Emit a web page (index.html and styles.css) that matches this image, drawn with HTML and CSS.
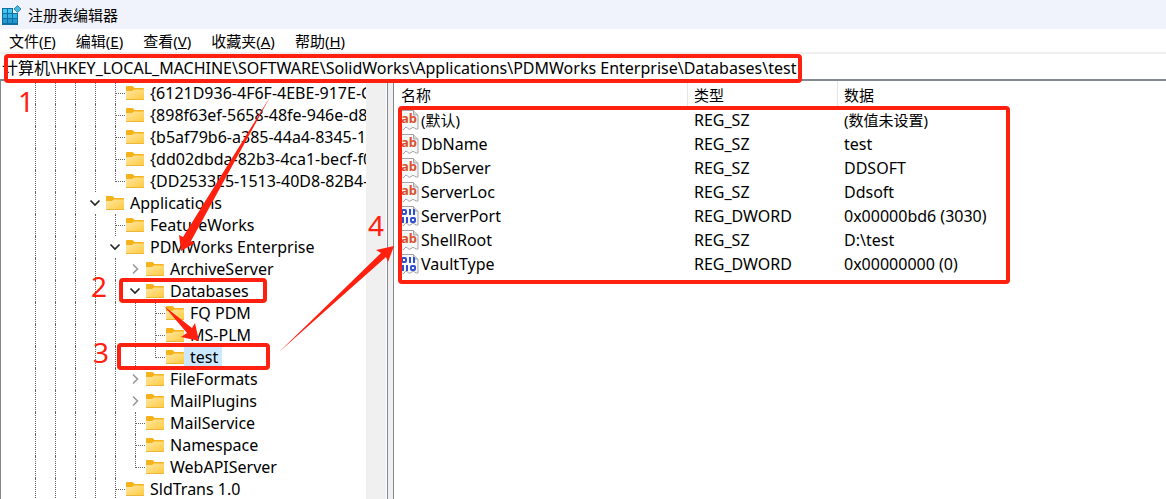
FILE: index.html
```
<!DOCTYPE html>
<html lang="zh-CN">
<head>
<meta charset="UTF-8">
<meta name="viewport" content="width=device-width, initial-scale=1.0">
<title>注册表编辑器</title>
<link rel="stylesheet" href="styles.css">
</head>

<body>

<!-- shared icons -->
<svg class="defs" aria-hidden="true">
  <defs>
    <linearGradient id="folderFill" x1="0" y1="0" x2="1" y2="1">
      <stop offset="0" stop-color="#ffe8a4"/>
      <stop offset="1" stop-color="#ffc93c"/>
    </linearGradient>
    <symbol id="folder" viewBox="0 0 18 15">
      <path d="M0 2V1q0-1 1-1h5q1 0 1.500 .7L8.500 2H17q1 0 1 1v5H0z" fill="#f5b21a"/>
      <path d="M0 5h6l2-1.500h10V14H0z" fill="url(#folderFill)"/>
      <path d="M0 13.500h18" stroke="#eeb73a"/>
    </symbol>
    <symbol id="down" viewBox="0 0 12 12">
      <path d="M1.500 3.500L6 8l4.500-4.500" fill="none" stroke="#222" stroke-width="1.600"/>
    </symbol>
    <symbol id="right" viewBox="0 0 12 12">
      <path d="M4 1.500L8.500 6 4 10.500" fill="none" stroke="#999" stroke-width="1.600"/>
    </symbol>
    <symbol id="page" viewBox="0 0 19 20">
      <path d="M1 .5h12.500l4.500 4.500V19q-2 .5-3.500-1t-3.500 .5-3.500-.5-3.500 1-2.500-1z" fill="#f7f7f7" stroke="#a5a5a5"/>
      <path d="M13.500 .5V5H18" fill="#ddd" stroke="#a5a5a5"/>
    </symbol>
    <symbol id="string" viewBox="0 0 19 20">
      <use href="#page"/>
      <text x="1" y="13" class="ab">ab</text>
    </symbol>
    <symbol id="binary" viewBox="0 0 19 20">
      <use href="#page"/>
      <g fill="none" stroke="#2f4fd0" stroke-width="2">
        <rect x="2" y="4" width="4" height="4" rx="1"/>
        <path d="M10 3v6M14 3v6M3 11v6M7 11v6"/>
        <rect x="11" y="12" width="4" height="4" rx="1"/>
      </g>
    </symbol>
  </defs>
</svg>

<div class="window">

<header class="titlebar">
  <svg class="logo" viewBox="0 0 20 20">
    <path d="M0 3h11v5h5v12H0z" fill="#0f6fa5"/>
    <path d="M1 4h4v4H1zM6 4h4v4H6z" fill="#45c4ee"/>
    <path d="M1 9h4v4H1zM6 9h4v4H6zM11 9h4v4h-4z" fill="#35b2e2"/>
    <path d="M1 14h4v4H1zM6 14h4v4H6zM11 14h4v4h-4z" fill="#2498ce"/>
    <path d="M15.500 .5L19 4l-3.500 3.500L12 4z" fill="#49b9e2" stroke="#3187b5"/>
  </svg>
  <h1>注册表编辑器</h1>
</header>

<nav class="menu">
  <button>文件(<u>F</u>)</button>
  <button>编辑(<u>E</u>)</button>
  <button>查看(<u>V</u>)</button>
  <button>收藏夹(<u>A</u>)</button>
  <button>帮助(<u>H</u>)</button>
</nav>

<input class="address" type="text" aria-label="地址" value="计算机\HKEY_LOCAL_MACHINE\SOFTWARE\SolidWorks\Applications\PDMWorks Enterprise\Databases\test">

<div class="panes">

<div class="tree">
<ul>
  <li><i></i><i></i><i></i><i></i><i class="tee"></i><svg><use href="#folder"/></svg><span>{6121D936-4F6F-4EBE-917E-C</span></li>
  <li><i></i><i></i><i></i><i></i><i class="tee"></i><svg><use href="#folder"/></svg><span>{898f63ef-5658-48fe-946e-d8</span></li>
  <li><i></i><i></i><i></i><i></i><i class="tee"></i><svg><use href="#folder"/></svg><span>{b5af79b6-a385-44a4-8345-10</span></li>
  <li><i></i><i></i><i></i><i></i><i class="tee"></i><svg><use href="#folder"/></svg><span>{dd02dbda-82b3-4ca1-becf-f0</span></li>
  <li><i></i><i></i><i></i><i></i><i class="end"></i><svg><use href="#folder"/></svg><span>{DD2533E5-1513-40D8-82B4-9</span></li>
  <li><i></i><i></i><i></i><svg class="arrow"><use href="#down"/></svg><svg><use href="#folder"/></svg><span>Applications</span></li>
  <li><i></i><i></i><i></i><i></i><i class="tee"></i><svg><use href="#folder"/></svg><span>FeatureWorks</span></li>
  <li><i></i><i></i><i></i><i></i><svg class="arrow"><use href="#down"/></svg><svg><use href="#folder"/></svg><span>PDMWorks Enterprise</span></li>
  <li><i></i><i></i><i></i><i></i><i></i><svg class="arrow"><use href="#right"/></svg><svg><use href="#folder"/></svg><span>ArchiveServer</span></li>
  <li><i></i><i></i><i></i><i></i><i></i><svg class="arrow"><use href="#down"/></svg><svg><use href="#folder"/></svg><span>Databases</span></li>
  <li><i></i><i></i><i></i><i></i><i></i><i></i><i class="tee"></i><svg><use href="#folder"/></svg><span>FQ PDM</span></li>
  <li><i></i><i></i><i></i><i></i><i></i><i></i><i class="tee"></i><svg><use href="#folder"/></svg><span>MS-PLM</span></li>
  <li class="selected"><i></i><i></i><i></i><i></i><i></i><i></i><i class="end"></i><svg><use href="#folder"/></svg><span>test</span></li>
  <li><i></i><i></i><i></i><i></i><i></i><svg class="arrow"><use href="#right"/></svg><svg><use href="#folder"/></svg><span>FileFormats</span></li>
  <li><i></i><i></i><i></i><i></i><i></i><svg class="arrow"><use href="#right"/></svg><svg><use href="#folder"/></svg><span>MailPlugins</span></li>
  <li><i></i><i></i><i></i><i></i><i></i><i class="tee"></i><svg><use href="#folder"/></svg><span>MailService</span></li>
  <li><i></i><i></i><i></i><i></i><i></i><i class="tee"></i><svg><use href="#folder"/></svg><span>Namespace</span></li>
  <li><i></i><i></i><i></i><i></i><i></i><i class="end"></i><svg><use href="#folder"/></svg><span>WebAPIServer</span></li>
  <li><i></i><i></i><i></i><i></i><i class="tee"></i><svg><use href="#folder"/></svg><span>SldTrans 1.0</span></li>
</ul>
<div class="scrollbar"></div>
</div>

<div class="values">
<table>
  <colgroup><col class="col-name"><col class="col-type"><col></colgroup>
  <thead>
    <tr><th>名称</th><th>类型</th><th>数据</th></tr>
  </thead>
  <tbody>
    <tr class="default"><td><div class="name"><svg><use href="#string"/></svg>(默认)</div></td><td>REG_SZ</td><td>(数值未设置)</td></tr>
    <tr><td><div class="name"><svg><use href="#string"/></svg>DbName</div></td><td>REG_SZ</td><td>test</td></tr>
    <tr><td><div class="name"><svg><use href="#string"/></svg>DbServer</div></td><td>REG_SZ</td><td>DDSOFT</td></tr>
    <tr><td><div class="name"><svg><use href="#string"/></svg>ServerLoc</div></td><td>REG_SZ</td><td>Ddsoft</td></tr>
    <tr><td><div class="name"><svg><use href="#binary"/></svg>ServerPort</div></td><td>REG_DWORD</td><td>0x00000bd6 (3030)</td></tr>
    <tr><td><div class="name"><svg><use href="#string"/></svg>ShellRoot</div></td><td>REG_SZ</td><td>D:\test</td></tr>
    <tr><td><div class="name"><svg><use href="#binary"/></svg>VaultType</div></td><td>REG_DWORD</td><td>0x00000000 (0)</td></tr>
  </tbody>
</table>
</div>

</div>
</div>

<!-- step marks drawn over the window -->
<svg class="marks">
  <rect x="6" y="56" width="794" height="25" rx="2"/>
  <rect x="121" y="280" width="144" height="21" rx="2"/>
  <rect x="119" y="345" width="149" height="23" rx="2"/>
  <rect x="400" y="108" width="608" height="174" rx="2"/>
  <path d="M270 97L191 241 195 243 181 251 179 235 183 237z"/>
  <path d="M164 306L192 328 195 323 199 341 181 337 187 333z"/>
  <path d="M279 352L386 257 388 262 394 246 376 250 381 253z"/>
  <text x="18" y="112">1</text>
  <text x="91" y="297">2</text>
  <text x="93" y="363">3</text>
  <text x="368" y="236">4</text>
</svg>

</body>
</html>
```
FILE: styles.css
```
*{box-sizing:border-box;}

body{
    margin:0;
    background:white;
    color:black;
    font-family:"Noto Sans", "Noto Sans CJK SC", sans-serif;
    font-size:15px;
    line-height:22px;
}

.defs{
    position:absolute;
    width:0;
    height:0;
}

.window{
    height:100vh;
    display:flex;
    flex-direction:column;
    overflow:hidden;
}

.titlebar{
    flex:none;
    display:flex;
    align-items:center;
    gap:6px;
    height:29px;
    padding-left:2px;
    background:#f0f3fb;
}

.titlebar h1{
    margin:0;
    font-size:15px;
    font-weight:normal;
    line-height:20px;
}

.logo{
    width:20px;
    height:20px;
}

.menu{
    flex:none;
    display:flex;
    gap:20px;
    height:25px;
    padding-left:9px;
    border-bottom:2px solid #f0f0f0;
}

.menu button{
    padding:0;
    border:none;
    background:none;
    color:inherit;
    font:inherit;
}

.address{
    flex:none;
    width:100%;
    height:27px;
    padding:0 2px;
    border:none;
    border-bottom:2px solid #828790;
    background:white;
    color:inherit;
    font:inherit;
    font-size:16px;
    outline:none;
}

.panes{
    flex:1;
    display:flex;
    gap:5px;
    min-height:0;
    background:#f0f0f0;
    font-size:16px;
}

/* TREE */
.tree{
    flex:none;
    display:flex;
    width:388px;
    border:1px solid #828790;
    border-width:0 1px;
    padding-right:1px;
    background:white;
}

.tree ul{
    flex:1;
    min-width:0;
    margin:0;
    padding:1px 0 0 24px;
    list-style:none;
    overflow:hidden;
}

.tree li{
    display:flex;
    align-items:center;
    height:22px;
    white-space:nowrap;
}

.tree li i{
    flex:none;
    align-self:stretch;
    width:10px;
    margin-left:10px;
    border-left:1px dotted #666;
}

.tree li .tee{
    display:flex;
    align-items:center;
}

.tree li .tee::after{
    content:"";
    flex:1;
    border-top:1px dotted #666;
}

.tree li .end{
    align-self:flex-start;
    height:12px;
    border-bottom:1px dotted #666;
}

.tree li svg{
    flex:none;
    width:18px;
    height:15px;
    margin-left:1px;
}

.tree li .arrow{
    width:12px;
    height:12px;
    margin:0 4px;
}

.tree li span{
    padding:0 4px 0 6px;
}

.selected span{
    background:#cce8ff;
}

.scrollbar{
    flex:none;
    width:20px;
    background:#f0f0f0;
}

/* VALUES */
.values{
    flex:1;
    min-width:0;
    border-left:1px solid #828790;
    background:white;
}

table{
    width:100%;
    table-layout:fixed;
    border-collapse:collapse;
}

.col-name{width:300px;}
.col-type{width:150px;}

th, td{
    padding:0;
    text-align:left;
    font-weight:normal;
    white-space:nowrap;
}

th{
    height:27px;
    padding:2px 0 2px 7px;
    background:linear-gradient(#e5e5e5, #e5e5e5) right 6px top / 1px 100% no-repeat;
    font-size:15px;
}

th:last-child{
    background:none;
}

th:nth-child(n+2){
    padding-left:0;
}

td{
    height:24px;
}

/* chinese text runs a size smaller */
.default .name, .default td:last-child{
    font-size:15px;
}

.name{
    display:flex;
    align-items:center;
    gap:2px;
    padding-left:6px;
}

.name svg{
    flex:none;
    width:19px;
    height:20px;
}

.ab{
    fill:#d9502e;
    font-size:13px;
    font-weight:bold;
}

/* MARKS */
.marks{
    position:absolute;
    top:0;
    left:0;
    width:100%;
    height:100%;
    pointer-events:none;
}

.marks rect{
    fill:none;
    stroke:#ff2010;
    stroke-width:4;
}

.marks path, .marks text{
    fill:#ff2010;
}

.marks text{
    font-size:28px;
}
```
